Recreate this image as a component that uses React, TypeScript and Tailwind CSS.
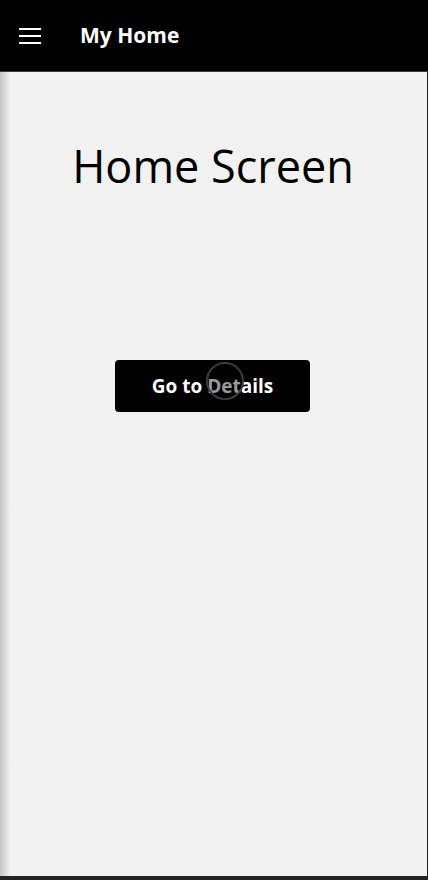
export default function App() {
  return (
    <div className="relative h-[880px] w-[428px] overflow-hidden bg-[#f2f2f2] font-['Open_Sans',sans-serif]">
      {/* Header */}
      <header className="flex h-[72px] items-center border-b border-[#3a3a3a] bg-black">
        <div className="ml-[19px] flex w-[22px] flex-col gap-[5px]">
          <span className="h-[2px] bg-white" />
          <span className="h-[2px] bg-white" />
          <span className="h-[2px] bg-white" />
        </div>
        <h1 className="ml-[39px] text-[21px] font-bold text-white">My Home</h1>
      </header>

      {/* Left drawer edge shadow */}
      <div className="pointer-events-none absolute left-0 top-[72px] h-[808px] w-[10px] bg-gradient-to-r from-[#c4c4c4] to-[#f2f2f2]" />

      {/* Content */}
      <main className="flex flex-col">
        <h2 className="mt-[64px] self-center pr-[2px] text-[45px] leading-[60px] text-black">Home Screen</h2>
        <button className="relative ml-[115px] mt-[164px] flex h-[52px] w-[195px] items-center justify-center rounded-[4px] bg-black text-[19px] font-bold text-white">
          Go to Details
          <span className="absolute left-[91px] top-[2px] h-[38px] w-[38px] rounded-full border-[2px] border-[#3c3c3c] bg-black/40" />
        </button>
      </main>

      {/* Bottom bar */}
      <div className="absolute bottom-0 left-0 h-[4px] w-full bg-[#232323]" />
      <div className="absolute right-0 top-[72px] h-[808px] w-[1px] bg-[#232323]" />
    </div>
  );
}
